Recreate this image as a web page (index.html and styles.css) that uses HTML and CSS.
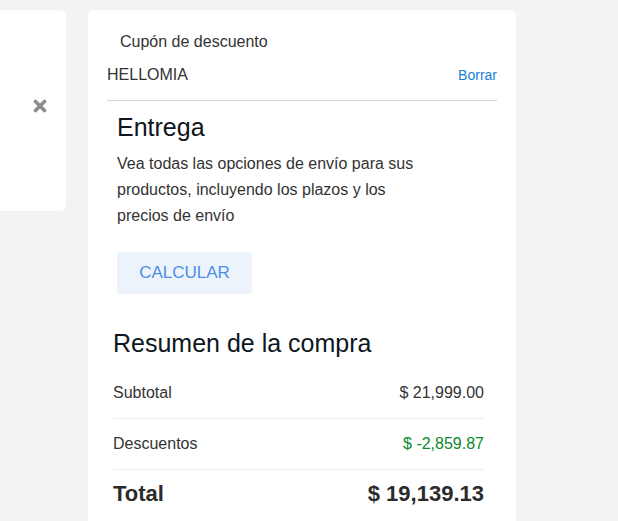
FILE: index.html
```html
<!DOCTYPE html>
<html lang="es">
<head>
  <meta charset="UTF-8">
  <meta name="viewport" content="width=device-width, initial-scale=1.0">
  <title>Carrito</title>
  <link rel="stylesheet" href="styles.css">
</head>
<body>
  <div class="page">
    <!-- tarjeta del producto (recortada a la izquierda) -->
    <div class="product-card">
      <button class="remove-btn" title="Quitar">
        <svg width="14" height="14" viewBox="0 0 14 14">
          <path d="M2.5 2.5 L11.5 11.5 M11.5 2.5 L2.5 11.5" stroke="#8c8c8c" stroke-width="3.6" stroke-linecap="round"/>
        </svg>
      </button>
    </div>

    <div class="side-card">
      <div class="coupon">
        <p class="coupon-label">Cupón de descuento</p>
        <div class="coupon-row">
          <span class="coupon-code">HELLOMIA</span>
          <a href="#" class="coupon-clear">Borrar</a>
        </div>
      </div>

      <div class="shipping">
        <h2>Entrega</h2>
        <p>Vea todas las opciones de envío para sus productos, incluyendo los plazos y los precios de envío</p>
        <button class="calc-btn">CALCULAR</button>
      </div>

      <div class="summary">
        <h2>Resumen de la compra</h2>
        <div class="summary-row">
          <span>Subtotal</span>
          <span>$ 21,999.00</span>
        </div>
        <div class="summary-row">
          <span>Descuentos</span>
          <span class="discount">$ -2,859.87</span>
        </div>
        <div class="summary-row total">
          <span>Total</span>
          <span>$ 19,139.13</span>
        </div>
      </div>
    </div>
  </div>
</body>
</html>
```

FILE: styles.css
```css
body {
  margin: 0;
  background-color: #f3f3f3;
  font-family: 'Liberation Sans', Arial, sans-serif;
  color: #333;
}

.page {
  display: flex;
  align-items: flex-start;
  gap: 22px;
  padding-top: 10px;
}

.product-card {
  width: 66px;
  height: 201px;
  background-color: white;
  border-radius: 0 6px 6px 0;
  display: flex;
  justify-content: flex-end;
  padding-top: 89px;
  box-sizing: border-box;
}

.remove-btn {
  background: none;
  border: none;
  padding: 0;
  margin-right: 19px;
  width: 14px;
  height: 14px;
  cursor: pointer;
}

.side-card {
  width: 428px;
  min-height: 560px;
  background-color: white;
  border-radius: 6px;
  padding-top: 22px;
  box-sizing: border-box;
}

/* cupon */
.coupon {
  margin: 0 19px;
  padding-bottom: 15px;
  border-bottom: 1px solid #d6d6d6;
}

.coupon-label {
  margin: 0 0 13px 13px;
  font-size: 16px;
  line-height: 20px;
}

.coupon-row {
  display: flex;
  justify-content: space-between;
  align-items: center;
  font-size: 16px;
  line-height: 20px;
}

.coupon-clear {
  font-size: 14px;
  color: #1a7fd4;
  text-decoration: none;
}

/* entrega */
.shipping {
  padding: 0 29px;
}

.shipping h2 {
  margin: 11px 0 9px;
  font-size: 25px;
  line-height: 30px;
  font-weight: normal;
  color: #0e1620;
}

.shipping p {
  margin: 0;
  max-width: 312px;
  font-size: 16px;
  line-height: 26px;
}

.calc-btn {
  margin-top: 23px;
  width: 135px;
  height: 42px;
  border: none;
  border-radius: 4px;
  background-color: #edf3fa;
  color: #4a8ee6;
  font-family: 'Liberation Sans', Arial, sans-serif;
  font-size: 17px;
  cursor: pointer;
}

/* resumen */
.summary {
  margin: 34px 32px 0 25px;
}

.summary h2 {
  margin: 0 0 10px;
  font-size: 25px;
  line-height: 30px;
  font-weight: normal;
  color: #0e1620;
}

.summary-row {
  display: flex;
  justify-content: space-between;
  font-size: 16px;
  line-height: 20px;
  padding: 15px 0 15px;
  border-bottom: 1px solid #eeeeee;
}

.discount {
  color: #0a8a2c;
}

.summary-row.total {
  border-bottom: none;
  padding-top: 10px;
  font-size: 22px;
  line-height: 28px;
  font-weight: bold;
  color: #2b2b2b;
}
```
